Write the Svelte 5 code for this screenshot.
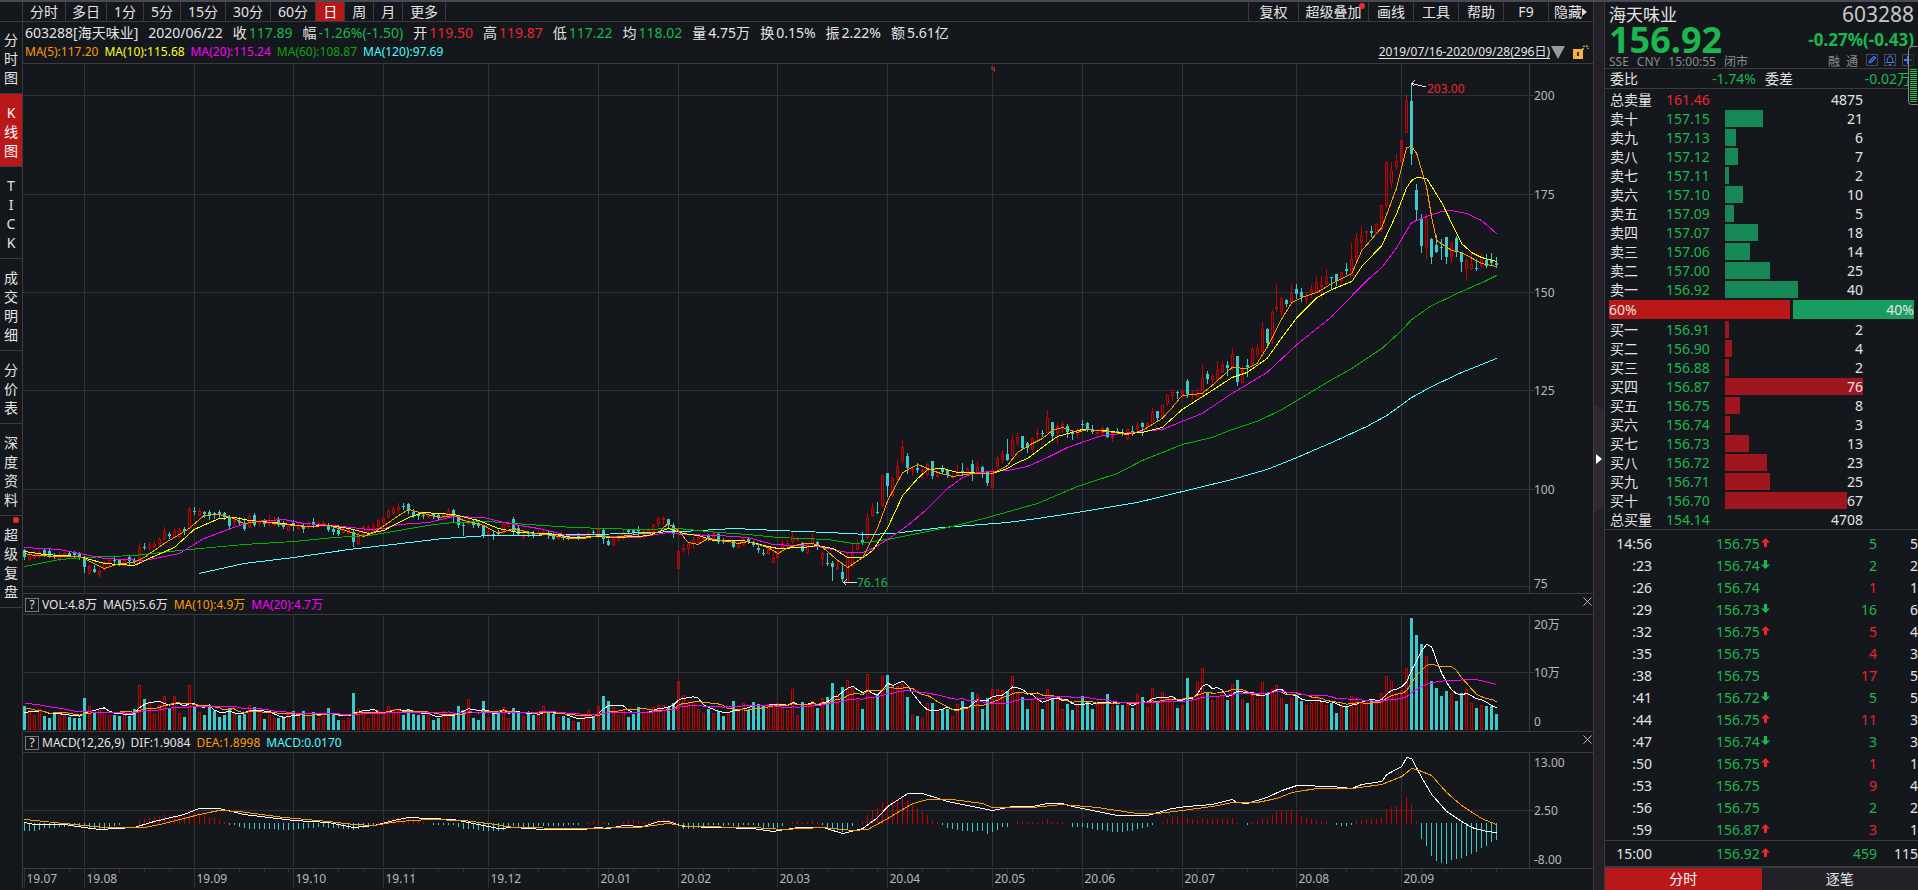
<script>
  const periods = ['分时', '多日', '1分', '5分', '15分', '30分', '60分', '日', '周', '月', '更多']
  const tools = ['复权', '超级叠加', '画线', '工具', '帮助', 'F9', '隐藏']
  const views = ['分时图', 'K线图', 'TICK', '成交明细', '分价表', '深度资料', '超级复盘']

  let period = $state('日')
  let view = $state('K线图')
  let tickMode = $state('分时')

  const quote = [
    ['收', '117.89', 'down'], ['幅', '-1.26%(-1.50)', 'down'], ['开', '119.50', 'up'],
    ['高', '119.87', 'up'], ['低', '117.22', 'down'], ['均', '118.02', 'down'],
    ['量', '4.75万', ''], ['换', '0.15%', ''], ['振', '2.22%', ''], ['额', '5.61亿', ''],
  ]

  const asks = [
    ['卖十', '157.15', 21], ['卖九', '157.13', 6], ['卖八', '157.12', 7], ['卖七', '157.11', 2],
    ['卖六', '157.10', 10], ['卖五', '157.09', 5], ['卖四', '157.07', 18], ['卖三', '157.06', 14],
    ['卖二', '157.00', 25], ['卖一', '156.92', 40],
  ]
  const bids = [
    ['买一', '156.91', 2], ['买二', '156.90', 4], ['买三', '156.88', 2], ['买四', '156.87', 76],
    ['买五', '156.75', 8], ['买六', '156.74', 3], ['买七', '156.73', 13], ['买八', '156.72', 23],
    ['买九', '156.71', 25], ['买十', '156.70', 67],
  ]
  const maxLot = 76

  // time, price, move, lots, side, count
  const ticks = [
    ['14:56', '156.75', 'up', 5, 'down', 5], [':23', '156.74', 'down', 2, 'down', 2],
    [':26', '156.74', '', 1, 'up', 1], [':29', '156.73', 'down', 16, 'down', 6],
    [':32', '156.75', 'up', 5, 'up', 4], [':35', '156.75', '', 4, 'up', 3],
    [':38', '156.75', '', 17, 'up', 5], [':41', '156.72', 'down', 5, 'down', 5],
    [':44', '156.75', 'up', 11, 'up', 3], [':47', '156.74', 'down', 3, 'down', 3],
    [':50', '156.75', 'up', 1, 'up', 1], [':53', '156.75', '', 9, 'up', 4],
    [':56', '156.75', '', 2, 'down', 2], [':59', '156.87', 'up', 3, 'up', 1],
    ['15:00', '156.92', 'up', 459, 'down', 115],
  ]

  // chart space: x 23..1529, one candle every 4.99
  const left = 23
  const width = 1506
  const px = i => 24.5 + i * 4.99
  const cx = i => Math.floor(px(i)) + 0.5
  const line = pts => pts.trim().split(/\s+/).map(p => {
    const [i, y] = p.split(',').map(Number)
    return `${px(i)},${y + 0.5}`
  }).join(' ')

  const months = [
    [12, '19.08'], [34, '19.09'], [54, '19.10'], [72, '19.11'], [93, '19.12'], [115, '20.01'],
    [131, '20.02'], [151, '20.03'], [173, '20.04'], [194, '20.05'], [212, '20.06'],
    [232, '20.07'], [255, '20.08'], [276, '20.09'],
  ]
  const weeks = [
    4, 9, 14, 19, 24, 29, 39, 43, 48, 53, 58, 63, 68, 78, 83, 88, 98, 103, 108, 113, 117, 122,
    127, 136, 141, 146, 156, 161, 166, 171, 176, 180, 185, 190, 197, 202, 207, 217, 222, 227, 230,
    235, 240, 245, 250, 260, 265, 270, 275, 280, 285, 290, 295,
  ]
  const prices = [[95, '200'], [194, '175'], [292, '150'], [390, '125'], [489, '100'], [586, '75']]

  // u/d, then high, body top, body bottom, low
  const candles = `
    d549,550,557,559 u553,556,559,560 u551,555,557,558 u550,552,556,557 d548,550,555,556 d549,551,556,557
    d553,555,557,558 u552,555,558,561 u552,553,556,557 d552,553,556,556 d551,552,555,557 d552,554,557,559
    d556,557,567,572 u565,566,573,574 d565,569,572,572 u570,571,574,577 u561,562,569,570 u558,560,563,565
    d557,560,561,564 d559,560,563,565 u558,560,565,566 d556,557,561,564 d558,560,562,563 u543,547,560,562
    d543,547,548,549 u542,545,548,550 u541,544,546,547 u537,539,543,544 u527,531,538,539 d532,534,536,538
    u528,531,537,538 u528,530,536,537 d527,529,531,534 u507,509,527,530 d507,511,512,514 u508,511,514,515
    d511,512,514,517 d510,512,515,519 d512,513,515,518 d510,512,515,517 d512,513,517,519 d515,517,526,528
    u517,520,521,525 d517,521,523,525 d518,523,529,530 u513,516,526,527 d513,515,525,526 u519,521,523,525
    d519,521,524,526 u515,521,523,525 u517,520,524,525 d517,520,525,526 d521,524,527,528 u524,526,530,530
    d520,523,526,530 u523,526,528,529 d524,526,529,532 u521,523,526,528 d518,522,525,527 u521,523,525,526
    u521,523,525,526 d523,525,530,531 d525,529,532,534 d525,530,534,535 u526,529,532,533 u527,530,532,533
    d529,532,542,546 u533,535,543,544 u525,527,534,537 u525,527,530,532 u523,526,530,531 u519,520,526,530
    u516,518,522,523 u509,511,516,517 u506,508,512,513 u503,507,509,512 d503,506,507,509 d503,504,511,513
    d509,512,516,517 d512,514,516,519 d513,515,516,518 u513,514,516,517 d513,514,516,518 d513,515,517,519
    u513,514,517,518 u508,511,516,517 d509,510,517,521 d516,517,525,527 d523,525,526,535 u519,521,523,524
    d520,522,525,527 d521,523,526,527 d525,526,535,537 u529,531,534,535 d531,534,535,539 d530,532,534,534
    u522,524,532,533 u521,523,526,526 d517,519,531,534 d526,528,534,535 u533,534,536,539 d531,533,534,536
    d531,533,535,537 u530,533,535,536 u530,532,534,535 d531,533,534,538 d533,535,539,539 u534,535,538,539
    d534,536,538,539 d535,537,539,539 u534,535,538,538 d533,535,538,539 u534,535,537,538 u531,533,535,536
    d530,532,533,534 u526,529,533,534 d528,530,539,543 d539,541,545,545 u537,539,545,545 u535,537,540,540
    u530,532,537,539 d529,530,532,533 d529,530,532,534 d526,529,531,537
    u530,531,534,537 u528,530,533,534 u524,525,531,533 u517,518,523,526 u516,518,519,524 d519,519,524,527
    d523,525,534,537 u550,551,568,568 u544,548,549,552 u543,544,548,554 u537,540,543,548 u535,537,542,543
    u534,538,539,541 d534,536,539,540 u530,533,538,541 d533,534,542,543 d538,541,542,543 u539,540,541,542
    d540,541,547,547 u542,545,547,547 u537,539,544,545 d538,539,542,543 d541,542,545,546 d543,548,550,552
    d549,553,554,555 u547,549,553,554 u548,558,562,562 u548,551,557,558 u540,543,547,549 u540,543,545,547
    u531,536,541,543 u537,539,540,540 d542,543,551,551 u543,544,552,553 u533,539,543,545 d541,542,547,549
    u552,553,558,565 d553,563,564,565 d561,563,567,580 u561,567,568,569 d564,572,579,581 u553,557,582,582
    u543,553,565,566 u539,543,549,549 d532,540,543,544 u513,518,537,538 u503,508,515,516 d502,512,513,513
    u475,475,505,506 d473,473,486,496 u477,478,495,496 u460,466,476,479 u440,447,460,463 d453,456,468,473
    u466,468,469,475 d463,468,470,472 u469,470,471,478 u463,464,474,476 d461,461,476,478 u471,475,476,476
    d465,469,472,473 d469,470,475,477 u474,476,477,478 u465,472,473,475 d463,471,473,474 u467,469,473,474
    d460,464,473,480 u461,467,472,474 d466,467,472,477 d471,472,483,485 u468,470,487,488 u456,458,465,468
    u450,454,459,463 d439,454,460,460 u435,440,455,456 u433,437,442,445 d436,436,448,449 d442,443,448,452
    u437,438,449,451 u429,433,434,440 d430,433,434,436 u410,418,432,432 d422,422,436,439 u423,426,432,443
    u421,424,426,432 d424,426,432,437 d430,432,434,439 u428,430,434,437 d420,424,425,430 d422,423,430,431
    d425,429,432,433 u429,432,433,436 u426,428,432,434 d427,428,437,437 u432,436,437,441 d428,431,432,433
    d429,432,433,435 u429,429,438,439 d426,431,433,435 u422,425,428,430
    d422,423,427,435 u422,423,425,427 u408,412,422,422 d411,411,418,421 u405,405,417,418 u394,395,403,405
    u389,392,395,399 d391,392,393,398 u389,391,394,396 d379,381,394,397 u391,393,394,398 u388,393,396,396
    u364,378,393,394 d371,374,379,383 u374,376,379,383 u361,370,379,380 u361,365,371,372 d361,365,368,375
    u348,354,366,370 d356,356,382,385 u366,370,382,382 d359,365,367,376 u347,349,363,366 u344,348,354,357
    u322,329,351,352 d328,329,343,345 u310,312,338,343 u284,307,308,311 u297,298,311,315 d299,300,304,306
    u284,293,302,302 d284,289,294,298 d288,292,297,301 u292,296,299,303 u285,289,292,297 u276,282,291,292
    u276,284,286,298 u269,277,283,284 d277,277,278,289 d274,274,281,285 u271,272,280,284 d263,269,271,274
    u243,259,275,276 u233,238,259,262 u226,236,242,251 u231,231,232,241 d226,231,233,236 u223,224,232,232
    u205,205,229,231 u161,162,205,207 u162,170,182,187 u154,161,166,169 u139,140,161,162 u95,101,132,132
    d83,101,154,164 d184,190,210,219 d214,219,246,252 u214,219,246,258 d238,239,257,263 d235,245,252,252
    d239,247,248,259 d237,237,257,263 u241,243,257,262 d236,238,251,256 d252,253,262,271 u259,260,268,279
    u253,264,268,269 d259,268,269,270 u253,259,265,267 d254,260,266,267 d253,260,263,264 d257,263,265,267
  `.trim().split(/\s+/).map(s => {
    const [high, top, bottom, low] = s.slice(1).split(',').map(Number)
    return { up: s[0] === 'u', high, top, bottom, low }
  })

  const priceLines = {
    ma120: line(`35,573 44,563 54,557 65,549 72,545 84,538 93,535 115,534 124,532 132,531 142,528 151,530
      161,532 169,534 174,533 184,527 197,522 203,518 211,512 217,507 223,502 242,479 249,469 255,457
      262,442 269,426 273,415 278,397 282,386 288,372 295,358`),
    ma60: line(`0,566 7,559 12,557 22,555 33,549 44,544 54,541 62,537 69,535 75,530 82,524 86,522 93,521
      101,524 110,527 123,529 131,528 139,532 145,534 151,537 161,539 166,543 169,542 174,538 180,532
      186,526 193,517 203,503 211,486 219,473 224,460 229,450 232,444 238,437 242,429 247,421 252,409
      256,397 261,382 266,368 272,348 276,330 278,319 282,305 288,291 293,280 295,275`),
    ma20: line(`0,547 7,549 12,554 16,558 24,560 31,553 36,538 43,525 46,521 52,519 56,523 62,525 69,529
      72,528 75,524 81,522 86,516 92,517 97,523 103,528 109,535 123,537 129,532 132,534 139,535 145,537
      150,544 159,546 162,549 165,552 168,552 170,548 173,539 177,525 181,508 185,488 188,477 191,472
      197,470 201,466 205,457 209,447 216,435 224,431 228,429 232,421 236,413 242,393 249,372 255,344
      262,316 269,280 272,267 275,247 277,230 278,222 281,216 284,211 286,210 289,213 292,220 295,233`),
    ma10: line(`0,551 4,554 11,556 16,563 22,565 25,558 30,547 34,529 39,518 42,517 45,520 52,523 56,526
      61,525 65,528 69,533 72,530 75,522 77,517 80,512 86,514 91,520 95,528 99,532 105,533 110,537 115,536
      118,537 123,536 125,535 129,528 132,533 135,535 138,540 144,540 149,546 151,548 156,547 159,545
      162,548 165,557 168,557 170,550 173,527 176,495 179,478 181,469 184,468 187,472 194,473 197,468
      199,462 201,458 205,443 207,436 212,429 216,430 221,433 224,432 228,427 232,409 238,390 242,377
      245,372 249,358 252,337 255,317 259,297 262,289 266,281 268,266 272,245 275,213 277,187 278,180
      279,177 281,178 284,202 288,243 290,252 292,257 295,261`),
    ma5: line(`0,553 2,555 7,556 11,556 12,558 16,568 19,563 22,562 24,557 28,543 30,537 33,528 36,515
      39,514 42,518 44,523 47,521 52,524 57,526 61,525 65,531 68,536 70,532 73,522 75,515 77,509 80,513
      83,517 86,515 88,520 92,525 95,533 98,528 102,533 106,535 109,538 112,538 115,535 118,537 124,533
      127,532 129,523 131,530 133,542 135,544 137,538 141,541 143,543 145,541 149,547 151,553 153,547
      156,543 158,543 160,547 163,560 165,567 168,557 171,527 173,500 176,472 179,464 181,468 183,472
      186,476 190,473 194,473 197,465 199,452 202,443 204,438 206,430 208,427 211,432 213,429 217,431
      221,434 224,430 228,418 230,407 232,395 236,393 238,385 242,367 245,368 247,363 249,347 252,318
      254,302 256,297 259,292 262,283 266,273 268,250 272,227 275,187 277,147 278,146 279,153 281,187
      282,217 283,240 286,250 288,252 292,263 295,266`),
  }

  const volumes = [
    24, 20, 15, 21, 14, 12, 18, 18, 14, 13, 12, 12, 32, 24, 17, 20, 18, 15, 15, 14, 17, 14, 21, 45, 31,
    27, 16, 25, 34, 22, 34, 17, 13, 45, 23, 18, 15, 25, 19, 13, 15, 22, 17, 15, 16, 25, 23, 20, 11, 15,
    12, 12, 13, 16, 19, 13, 19, 15, 18, 12, 14, 22, 16, 10, 10, 12, 37, 21, 17, 12, 17, 20, 17, 24, 21,
    20, 15, 21, 16, 15, 15, 15, 10, 12, 19, 16, 15, 24, 20, 31, 12, 10, 29, 13, 18, 17, 23, 12, 22, 17,
    14, 16, 15, 16, 24, 17, 16, 13, 14, 12, 9, 8, 15, 20, 13, 24, 34, 29, 23, 15, 20, 13, 16, 23,
    17, 19, 23, 25, 25, 23, 27, 49, 35, 27, 28, 21, 17, 21, 17, 19, 14, 16, 29, 19, 27, 20, 28, 26, 24,
    26, 25, 27, 25, 20, 41, 15, 28, 26, 29, 22, 32, 33, 47, 36, 43, 50, 42, 30, 21, 56, 33, 36, 54, 55,
    45, 44, 46, 33, 15, 14, 12, 27, 27, 18, 21, 21, 14, 26, 29, 21, 38, 36, 21, 32, 41, 41, 40, 39, 54,
    37, 33, 21, 31, 33, 21, 41, 32, 33, 21, 26, 20, 25, 34, 29, 21, 26, 27, 36, 24, 25, 25, 25, 22, 36,
    33, 23, 42, 27, 38, 33, 29, 22, 25, 52, 30, 48, 62, 38, 30, 34, 35, 30, 46, 50, 31, 27, 35, 31, 48,
    36, 41, 45, 32, 26, 32, 35, 29, 25, 27, 34, 28, 25, 27, 17, 23, 24, 34, 32, 27, 30, 31, 27, 37, 54,
    49, 37, 40, 62, 112, 95, 86, 74, 49, 42, 34, 39, 37, 29, 37, 41, 27, 22, 25, 24, 24, 16,
  ]
  // sessions before the visible range, needed by the averages
  const earlier = [32, 31, 33, 32, 32, 31, 33, 32, 32, 32, 27, 28, 27, 26, 27, 15, 16, 15, 16]

  function volumeAverage(n) {
    const all = [...earlier, ...volumes]
    return volumes.map((_, i) => {
      const end = i + earlier.length + 1
      const sum = all.slice(end - n, end).reduce((a, b) => a + b, 0)
      return `${px(i)},${730 - sum / n}`
    }).join(' ')
  }

  const macd = [
    -7, -7, -7, -6, -4, -4, -4, -3, -3, -2, -1, -2, -2, -4, -5, -6, -5, -3, -2, -1, 0, 0, 0, 3, 4, 6, 6,
    6, 8, 8, 8, 7, 7, 11, 11, 10, 8, 6, 5, 3, 1, -1, -1, -3, -4, -5, -5, -5, -5, -5, -5, -6, -6, -6, -6,
    -5, -5, -4, -4, -3, -3, -4, -4, -4, -5, -5, -6, -5, -4, -2, -1, 1, 2, 4, 6, 6, 6, 6, 4, 2, 1, 0, -1,
    -1, -1, -1, -1, -3, -5, -5, -5, -6, -7, -7, -7, -7, -6, -4, -2, -3, -3, -3, -3, -2, -2, -2, -2, -2,
    -2, -1, -1, -1, 0, 1, 2, 2, 1, -1, 0, 0, 1, 2, 3, 2,
    1, 1, 2, 4, 5, 4, 2, -2, -5, -5, -5, -4, -3, -1, -1, -1, -2, -1, -2, -3, -1, -1, -1, -2, -4, -3, -4,
    -4, -2, 0, 1, 2, 1, 1, 2, 1, -1, -3, -5, -6, -8, -6, -2, 0, 2, 8, 13, 15, 21, 22, 23, 24, 27, 23, 20,
    15, 11, 8, 3, 1, -1, -4, -5, -6, -7, -7, -8, -7, -7, -10, -8, -6, -3, -3, 0, 2, 1, 1, 1, 1, 2, 4, 1,
    1, 1, 0, -3, -3, -3, -4, -5, -6, -6, -7, -8, -8, -8, -7, -7, -5,
    -4, -3, -1, 0, 1, 4, 6, 6, 6, 5, 4, 3, 4, 4, 4, 4, 5, 4, 5, 1, 0, -1, 1, 2, 5, 4, 8, 12, 13, 12, 13,
    10, 7, 5, 4, 3, 2, 1, 0, -1, -2, -2, -1, 2, 3, 4, 4, 4, 6, 14, 16, 17, 20, 26, 19, 2, -15, -22, -32,
    -37, -39, -40, -36, -35, -34, -32, -30, -28, -24, -22, -18, -16,
  ]
  const dif = line(`0,822 2,824 8,824 12,827 15,829 22,827 26,821 32,814 35,808 39,808 44,814 54,820 61,822
    66,827 70,825 74,820 77,817 81,818 86,819 90,823 95,828 98,827 104,829 112,829 115,827 117,828 120,825
    124,826 127,821 129,821 132,826 139,827 146,828 150,831 155,827 160,827 164,833 168,828 171,817 173,806
    177,793 180,793 185,801 190,806 194,810 198,806 202,806 205,803 208,803 210,806 215,811 219,815 225,815
    230,808 233,806 238,804 242,799 243,802 245,803 249,797 252,790 255,785 262,786 266,788 268,784 272,781
    273,774 276,766 277,757 278,758 280,777 282,794 285,811 288,821 290,827 293,831 295,832`)
  const dea = line(`0,819 6,822 16,827 24,827 28,823 32,818 35,814 39,810 43,811 52,817 61,821 66,824 70,825
    75,821 81,819 88,820 93,823 98,827 110,828 123,827 129,823 133,826 146,827 152,829 160,827 166,830
    169,829 173,818 178,803 181,799 186,799 192,803 194,807 202,807 208,804 215,807 223,813 227,813 232,810
    238,806 242,802 247,802 251,798 254,792 259,788 266,788 272,784 276,776 278,768 279,769 282,775 285,792
    288,805 292,818 295,824`)
</script>

{#snippet close(label)}
  <button class="close" aria-label={label}>
    <svg width="9" height="9" viewBox="0 0 9 9"><path d="M.5 .5l8 8M8.5 .5l-8 8" stroke="#bbb" /></svg>
  </button>
{/snippet}

{#snippet monthLines(y1, y2)}
  {#each months as [i]}
    <line class="grid" x1={cx(i)} x2={cx(i)} {y1} {y2} />
  {/each}
{/snippet}

{#snippet depth(rows, side)}
  {#each rows as [name, price, lots]}
    <tr>
      <th scope="row">{name}</th>
      <td class="down">{price}</td>
      <td>
        <div class="lots">
          <i class={side} style="width: {lots / maxLot * 100}%"></i>
          <span>{lots}</span>
        </div>
      </td>
    </tr>
  {/each}
{/snippet}

<div class="app">
  <main class="chart">
    <nav class="toolbar">
      <div class="tabs">
        {#each periods as p}
          <button class:active={period === p} onclick={() => period = p}>{p}</button>
        {/each}
      </div>
      <div class="tools">
        {#each tools as t}
          <button class:wide={t === '超级叠加'} class:mid={t === '复权'}>
            {t}{#if t === '隐藏'}<svg width="6" height="8" viewBox="0 0 6 8"><path d="M0 0l5 4-5 4z" fill="#ddd" /></svg>{/if}
            {#if t === '超级叠加'}<b class="dot"></b>{/if}
          </button>
        {/each}
      </div>
    </nav>

    <div class="body">
      <aside class="views">
        {#each views as v}
          <button class:active={view === v} aria-label={v} onclick={() => view = v}>
            {#each [...v] as ch}<span>{ch}</span>{/each}
            {#if v === '超级复盘'}<b class="dot"></b>{/if}
          </button>
        {/each}
      </aside>

      <div class="panes">
        <header class="info">
          <div class="quote">
            <span>603288[海天味业]</span>
            <span>2020/06/22</span>
            {#each quote as [name, value, tone]}
              <span>{name}<em class={tone}>{value}</em></span>
            {/each}
          </div>
          <div class="legend">
            <span class="c-orange">MA(5):117.20</span>
            <span class="c-yellow">MA(10):115.68</span>
            <span class="c-magenta">MA(20):115.24</span>
            <span class="c-green">MA(60):108.87</span>
            <span class="c-cyan">MA(120):97.69</span>
            <button class="range">2019/07/16-2020/09/28(296日)</button>
            <svg width="14" height="13" viewBox="0 0 14 13"><path d="M0 0h14L7 13z" fill="#9a9a9a" /></svg>
            <svg class="lock" width="16" height="14" viewBox="0 0 16 14">
              <path d="M10 5V3q0-2 2.500-2T15 3v1" fill="none" stroke="#e8a93a" stroke-width="1.500" stroke-dasharray="2 1" />
              <rect y="4" width="10" height="10" fill="#f0b444" />
              <path d="M4 7h2v4H4z" fill="#3a2c10" />
            </svg>
          </div>
        </header>

        <section class="pane">
          <div class="plot">
            <svg class="price" viewBox="{left} 64 {width} 529" preserveAspectRatio="none">
              {@render monthLines(64, 593)}
              {#each prices as [y]}
                <line class="grid" x1="23" x2="1529" y1={y + 0.5} y2={y + 0.5} />
              {/each}
              {#each candles as c, i}
                {@const x = cx(i)}
                {#if c.up}
                  <path class="rise" d="M{x} {c.high}V{c.top}M{x} {c.bottom + 1}V{c.low + 1}M{x - 1} {c.top + 0.5}h2V{Math.max(c.bottom, c.top) + 0.5}h-2z" />
                {:else}
                  <path class="fall" d="M{x} {c.high}V{c.low + 1}" />
                  <rect class="fall-body" x={x - 1.5} y={c.top} width="3" height={Math.max(c.bottom - c.top, 1)} />
                {/if}
              {/each}
              <polyline class="s-cyan" points={priceLines.ma120} />
              <polyline class="s-green" points={priceLines.ma60} />
              <polyline class="s-magenta" points={priceLines.ma20} />
              <polyline class="s-yellow" points={priceLines.ma10} />
              <polyline class="s-orange" points={priceLines.ma5} />
              <path class="arrow" d="M1426 87L1411.500 83.500M1414.500 80.500l-3 3 3 3" />
              <path class="arrow" d="M857 582.500H843M846.500 579.500l-3 3 3 3" />
              <path d="M990.500 67.500h4v4M991 69.500h3" fill="none" stroke="#e02020" />
            </svg>
            <span class="note up" style="left: {(1427 - left) / width * 100}%; top: 16px">203.00</span>
            <span class="note down" style="left: {(857 - left) / width * 100}%; top: 510px">76.16</span>
          </div>
          <div class="scale">
            {#each prices as [y, label]}
              <span class:notch={y < 580} style="top: {Math.min(y - 72, 511)}px">{label}</span>
            {/each}
          </div>
        </section>

        <header class="sub">
          <button class="help">?</button>
          <span>VOL:4.8万</span>
          <span>MA(5):5.6万</span>
          <span class="c-orange">MA(10):4.9万</span>
          <span class="c-magenta">MA(20):4.7万</span>
          {@render close('关闭成交量')}
        </header>
        <section class="pane">
          <div class="plot">
            <svg class="volume" viewBox="{left} 615 {width} 116" preserveAspectRatio="none">
              {@render monthLines(615, 731)}
              <line class="grid" x1="23" x2="1529" y1="672.5" y2="672.5" />
              {#each volumes as v, i}
                {#if candles[i].up}
                  <rect class="rise" x={cx(i) - 1} y={730.5 - v} width="2" height={v - 1} />
                {:else}
                  <rect class="fall-body" x={cx(i) - 1.5} y={730 - v} width="3" height={v} />
                {/if}
              {/each}
              <polyline class="s-white" points={volumeAverage(5)} />
              <polyline class="s-orange" points={volumeAverage(10)} />
              <polyline class="s-magenta" points={volumeAverage(20)} />
            </svg>
          </div>
          <div class="scale">
            <span style="top: 1px">20万</span>
            <span class="notch" style="top: 49px">10万</span>
            <span style="top: 98px">0</span>
          </div>
        </section>

        <header class="sub">
          <button class="help">?</button>
          <span>MACD(12,26,9)</span>
          <span>DIF:1.9084</span>
          <span class="c-orange">DEA:1.8998</span>
          <span class="c-cyan">MACD:0.0170</span>
          {@render close('关闭MACD')}
        </header>
        <section class="pane">
          <div class="plot">
            <svg class="macd" viewBox="{left} 753 {width} 115" preserveAspectRatio="none">
              {@render monthLines(753, 867)}
              <line class="grid" x1="23" x2="1529" y1="810.5" y2="810.5" />
              {#each macd as m, i}
                {#if m > 0}
                  <path class="rise" d="M{cx(i)} 824v{-m - 1}" />
                {:else if m < 0}
                  <path class="fall" d="M{cx(i)} 823v{-m + 1}" />
                {/if}
              {/each}
              <polyline class="s-white" points={dif} />
              <polyline class="s-orange" points={dea} />
            </svg>
          </div>
          <div class="scale">
            <span style="top: 1px">13.00</span>
            <span class="notch" style="top: 49px">2.50</span>
            <span style="top: 98px">-8.00</span>
          </div>
        </section>

        <footer class="dates">
          <div class="plot">
            <svg class="ruler" viewBox="{left} 869 {width} 20" preserveAspectRatio="none">
              <line class="grid" x1="24.500" x2="24.500" y1="869" y2="889" />
              {@render monthLines(869, 889)}
              {#each weeks as i}
                <line class="grid" x1={cx(i)} x2={cx(i)} y1="869" y2="873" />
              {/each}
            </svg>
            {#each [[0, '19.07'], ...months] as [i, label]}
              <span class="date" style="left: {(cx(i) - left + 2) / width * 100}%">{label}</span>
            {/each}
          </div>
        </footer>
      </div>
    </div>
  </main>

  <button class="gutter" aria-label="收起">
    <svg width="10" height="108" viewBox="0 0 10 108">
      <path d="M0 0l10 5v97l-10 6z" fill="#2d2b31" />
      <path d="M2 49l6 5-6 5z" fill="#fff" />
    </svg>
  </button>

  <aside class="side">
    <header class="stock">
      <div class="row"><h1>海天味业</h1><span class="num">603288</span></div>
      <div class="row"><strong class="last down">156.92</strong><strong class="change down">-0.27%(-0.43)</strong></div>
      <div class="row meta">
        <span>SSE</span><span>CNY</span><span>15:00:55</span><span>闭市</span>
        <span class="flags">融</span><span>通</span>
        <button aria-label="编辑">
          <svg width="10" height="10" viewBox="0 0 10 10"><path d="M2 8l1-3 4-4 2 2-4 4z" fill="#1b4fae" stroke="#3f7df0" /></svg>
        </button>
        <button aria-label="提醒">
          <svg width="10" height="10" viewBox="0 0 10 10"><path d="M1 7.500q1.500-1 1.500-3.500a2.500 2.500 0 0 1 5 0q0 2.500 1.500 3.500zM4 9.500h2M5 0v1" fill="none" stroke="#3f7df0" /></svg>
        </button>
        <button aria-label="添加">
          <svg width="10" height="10" viewBox="0 0 10 10"><path d="M5 1v8M1 5h8" stroke="#3f7df0" stroke-width="2" /></svg>
        </button>
      </div>
    </header>

    <div class="ratio-row">
      <span>委比</span><em class="down">-1.74%</em><span>委差</span><em class="down">-0.02万</em>
    </div>

    <table class="book">
      <tbody>
        <tr><th scope="row">总卖量</th><td class="up">161.46</td><td class="total">4875</td></tr>
        {@render depth(asks, 'ask')}
      </tbody>
    </table>
    <div class="share"><span class="buy" style="flex-grow: 60">60%</span><span class="sell" style="flex-grow: 40">40%</span></div>
    <table class="book">
      <tbody>
        {@render depth(bids, 'bid')}
        <tr><th scope="row">总买量</th><td class="down">154.14</td><td class="total">4708</td></tr>
      </tbody>
    </table>

    <div class="tape">
      <table class="ticks">
        <tbody>
          {#each ticks as [time, price, move, lots, tone, count]}
            <tr>
              <td class="time">{time}</td>
              <td class="deal down">{price}{#if move}<svg class={move} width="9" height="9" viewBox="0 0 9 9"><path d={move === 'up' ? 'M4.5 0L9 4.500H6V9H3V4.500H0z' : 'M4.5 9L9 4.500H6V0H3v4.500H0z'} /></svg>{/if}</td>
              <td class={tone}>{lots}</td>
              <td>{count}</td>
            </tr>
          {/each}
        </tbody>
      </table>
    </div>
    <div class="modes">
      {#each ['分时', '逐笔'] as m}
        <button class:active={tickMode === m} onclick={() => tickMode = m}>{m}</button>
      {/each}
    </div>

    <svg class="meter" width="10" height="60" viewBox="0 0 10 60">
      <rect x=".5" y=".5" width="12" height="58" rx="3" fill="#14171c" fill-opacity=".6" stroke="#8a8a8a" />
      {#each Array(17) as _, i}
        <rect x="2" y={23 + i * 2} width="7" height="1" fill="#2fbf55" />
      {/each}
    </svg>
  </aside>
</div>

<style>
  :global(body) { background: #14171c; }

  .app {
    display: grid; grid-template-columns: minmax(0, 1fr) 10px 314px;
    border-top: 2px solid #4b4a52; border-bottom: 1px solid #08090b;
    background: #14171c; color: #e4e4e4; overflow: hidden; box-sizing: border-box;
    min-height: 100vh;
    font-family: "Noto Sans", "Noto Sans CJK SC", sans-serif; font-size: 14px; line-height: 19px;
  }

  button {
    background: none; border: 0; padding: 0; margin: 0; color: inherit;
    font: inherit; cursor: pointer; white-space: nowrap;
  }
  em { font-style: normal; }
  svg { display: block; }
  .up { color: #f0232e; }
  .down { color: #1ab84f; }

  .chart { border-right: 1px solid #3a3a40; min-width: 0; }

  .toolbar {
    display: flex; justify-content: space-between; height: 19px;
    padding-left: 22px; border-bottom: 1px solid #3a3a40;
  }
  .tabs, .tools { display: flex; }
  .tabs button { border-right: 1px solid #3a3a40; padding: 0 7px; }
  .tabs button:nth-child(2) { padding: 0 6px; }
  .tabs { border-left: 1px solid #3a3a40; }
  .tabs .active { background: #b91818; color: #fff; }
  .tools button {
    display: flex; align-items: center; justify-content: center; position: relative;
    width: 45px; box-sizing: border-box; border-left: 1px solid #3a3a40;
  }
  .tools .mid { width: 50px; }
  .tools .wide { width: 70px; }
  .dot {
    position: absolute; top: 1px; right: 3px; width: 6px; height: 6px;
    border-radius: 50%; background: #f02c2c;
  }

  .body { display: flex; }
  .views {
    display: flex; flex-direction: column; flex: none;
    width: 22px; border-right: 1px solid #3a3a40;
  }
  .views button {
    position: relative; padding: 9px 0 6px; text-align: center;
    border-bottom: 1px solid #3a3a40;
  }
  .views button:first-child { padding-top: 8px; }
  .views span { display: block; }
  .views .active { background: #b91818; color: #fff; }

  .panes { flex: 1; min-width: 0; }
  .info { height: 41px; border-bottom: 1px solid #3a3a40; }
  .quote { display: flex; gap: 10px; padding-left: 2px; line-height: 21px; white-space: nowrap; }
  .quote em { margin-left: 2px; }
  .legend, .sub {
    display: flex; align-items: center; gap: 6px; padding-left: 2px;
    font-size: 12px; line-height: 18px; white-space: nowrap;
  }
  .range { margin-left: auto; margin-right: -5px; text-decoration: underline; text-underline-offset: 2px; }
  .lock { margin: 0 4px 0 2px; }
  .c-orange { color: #ff9a00; }
  .c-yellow { color: #ffff20; }
  .c-magenta { color: #ff00ff; }
  .c-green { color: #0aa80a; }
  .c-cyan { color: #4ff; }

  .sub { height: 18px; padding-top: 2px; border-bottom: 1px solid #3a3a40; }
  .help {
    width: 14px; height: 14px; box-sizing: border-box; border: 1px solid #77777c;
    line-height: 12px; margin-right: -3px;
  }
  .close { margin-left: auto; margin-right: 1px; align-self: flex-start; padding: 1px 0; }

  .pane { display: flex; border-bottom: 1px solid #3a3a40; }
  .plot { position: relative; flex: 1; min-width: 0; }
  .plot svg { width: 100%; shape-rendering: crispEdges; }
  .price { height: 529px; }
  .volume { height: 116px; }
  .macd { height: 115px; }
  .ruler { height: 20px; }
  .scale { position: relative; width: 63px; border-left: 1px solid #3a3a40; }
  .scale span {
    position: absolute; left: 0; padding-left: 4px;
    font-size: 12px; line-height: 17px; color: #b9b9b9;
  }
  .scale .notch::before {
    content: ''; position: absolute; left: 0; top: 8px; width: 4px; height: 1px; background: #3a3a40;
  }
  .note { position: absolute; font-size: 12px; line-height: 17px; }
  .dates { display: flex; margin-right: 64px; }
  .date { position: absolute; top: 0; font-size: 12px; line-height: 20px; color: #b9b9b9; }

  .grid { stroke: #303136; }
  .rise { fill: none; stroke: #c80000; }
  .fall { fill: none; stroke: #3acaca; }
  .fall-body { fill: #3acaca; }
  .arrow { fill: none; stroke: #ddd; }
  polyline { fill: none; }
  .s-white { stroke: #fff; }
  .s-orange { stroke: #ff9a00; }
  .s-yellow { stroke: #ff0; }
  .s-magenta { stroke: #f0f; }
  .s-green { stroke: #00b400; }
  .s-cyan { stroke: #5ff; }

  .gutter { display: flex; align-items: flex-start; padding-top: 403px; background: #232127; }

  .side { position: relative; min-width: 0; border-left: 1px solid #3a3a40; }
  .stock { padding: 0 4px; border-bottom: 1px solid #3a3a40; }
  .row { display: flex; align-items: center; justify-content: space-between; height: 25px; }
  h1 { margin: 0; font-size: 17px; font-weight: 400; line-height: 25px; }
  .num { font-size: 21px; color: #c8c8c8; }
  .last { font-size: 36px; line-height: 25px; }
  .change { font-size: 17px; line-height: 20px; }
  .meta {
    height: 16px; align-items: flex-end; justify-content: flex-start; gap: 8px;
    font-size: 12px; line-height: 12px; color: #8c8c8c;
  }
  .meta .flags { margin-left: auto; margin-right: -2px; }
  .meta button {
    width: 12px; height: 12px; box-sizing: border-box;
    border: 1px solid #4a4a50; margin: 0 -2px 2px 0;
  }
  .meta button:last-child { margin-right: 0; }

  .ratio-row {
    display: grid; grid-template-columns: 56px 90px 50px 1fr; padding: 0 7px 0 5px;
    line-height: 20px; height: 19px; border-bottom: 1px solid #3a3a40;
  }
  .ratio-row em { text-align: right; }
  .ratio-row span:nth-of-type(2) { padding-left: 9px; }

  table { border-collapse: collapse; border-spacing: 0; table-layout: fixed; }
  th, td { padding: 0; font-weight: 400; text-align: left; white-space: nowrap; }
  .book { width: 253px; margin: 1px 0 0 5px; }
  .book tr { height: 19px; }
  .book th { width: 56px; }
  .book td { width: 59px; }
  .book td:last-child { width: 138px; }
  .book .total { text-align: right; }
  .lots { display: grid; align-items: center; }
  .lots > * { grid-area: 1 / 1; }
  .lots span { text-align: right; }
  .lots i { height: 17px; }
  .ask { background: #168756; }
  .bid { background: #a0161e; }

  .share { display: flex; gap: 3px; margin: 1px 4px 0; line-height: 19px; }
  .share span { flex-basis: 0; }
  .buy { background: #b91818; }
  .sell { background: #189c60; text-align: right; }
  .share + .book { margin-top: 1px; }

  .tape { padding-top: 2px; border-top: 1px solid #3a3a40; }
  .ticks { width: 100%; }
  .ticks td { width: 41px; height: 22px; text-align: right; }
  .ticks .time { width: 47px; }
  .ticks .deal { width: 119px; text-align: left; padding-left: 64px; box-sizing: border-box; }
  .ticks td:nth-child(3) { width: 106px; }
  .ticks tr:last-child td { height: 25px; border-top: 1px solid #3a3a40; }
  .deal svg { display: inline-block; margin-left: 1px; vertical-align: 2px; fill: currentColor; }

  .modes { display: flex; border-top: 2px solid #3a3a40; }
  .modes button { flex: 1; background: #232127; line-height: 22px; }
  .modes .active { background: #b91818; color: #fff; }

  .meter { position: absolute; right: 0; top: 44px; }
</style>
